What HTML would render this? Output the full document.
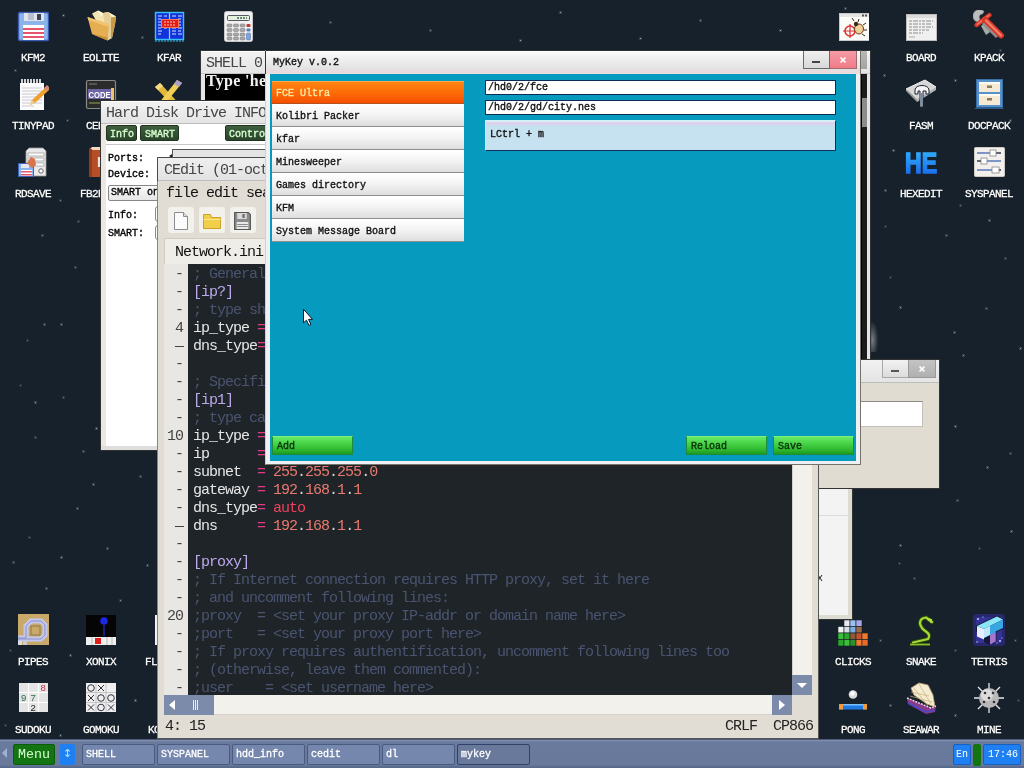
<!DOCTYPE html>
<html lang="en">
<head>
<meta charset="utf-8">
<title>KolibriOS desktop</title>
<style>
html,body{margin:0;padding:0;}
.win,.ico,#bar,#stars{will-change:transform;}
body{width:1024px;height:768px;overflow:hidden;background:#16212b;position:relative;
  font-family:"Liberation Mono","DejaVu Sans Mono",monospace;font-size:10px;line-height:1;color:#000;}
.abs,.abs *{position:absolute;box-sizing:border-box;}
.abs{left:0;top:0;}
.t{white-space:pre;}
/* desktop icons */
.ico{position:absolute;width:68px;height:60px;}
.ico svg{position:absolute;left:18px;top:0;width:32px;height:32px;}
.ico span{position:absolute;left:-10px;width:88px;top:42px;text-align:center;color:#fff;font-size:11px;line-height:12px;letter-spacing:-0.6px;
  font-family:"Liberation Mono",monospace;text-shadow:0 0 1px #000;-webkit-text-stroke:0.3px #fff;}
/* windows */
.win{position:absolute;box-sizing:border-box;}
.win *{position:absolute;box-sizing:border-box;}
.ttl{font-family:"Liberation Mono",monospace;font-size:15px;letter-spacing:-1px;line-height:16px;color:#454545;white-space:pre;margin-top:1px;}
.s6{font-family:"Liberation Mono",monospace;font-size:10px;line-height:11px;white-space:pre;}
.b6{font-family:"Liberation Mono",monospace;font-size:10px;line-height:11px;white-space:pre;font-weight:normal;-webkit-text-stroke:0.35px currentColor;}
/* taskbar */
#bar{position:absolute;left:0;top:739px;width:1024px;height:29px;background:linear-gradient(#8593b1 0,#6a7a9d 2px,#69799c 25px,#586a8c 27px);border-top:1px solid #4d5a78;box-sizing:border-box;}
#bar *{position:absolute;box-sizing:border-box;}
.tb{top:4px;height:21px;width:73px;background:#7587ad;border:1px solid #4a5b80;border-radius:2px;color:#fff;
  font-family:"Liberation Mono",monospace;font-size:10px;line-height:11px;padding:4px 0 0 3px;white-space:pre;-webkit-text-stroke:0.3px #fff;}
.tb.act{background:#69799c;border-color:#30426a;}

#gut,#code{margin:0;font-family:"Liberation Mono",monospace;font-size:15px;letter-spacing:-1px;line-height:18px;white-space:pre;}
#gut{left:9px;top:108px;color:#444;}
#code{left:35px;top:108px;color:#d8d8d8;}
#code i{position:static;font-style:normal;}
#code .c{color:#4a5470;}
#code .s{color:#bca9ec;}
#code .k{color:#e6e6e6;}
#code .q{color:#e23a86;}
#code .v{color:#ea7a6e;}
#code .w{color:#f0405e;}

.li{left:6px;width:192px;height:23px;background:linear-gradient(#ffffff,#f4f4f4 45%,#dedede);border-bottom:1px solid #8e8e8e;border-top:1px solid #fff;
  font-family:"Liberation Mono",monospace;font-size:10px;line-height:11px;font-weight:normal;-webkit-text-stroke:0.35px currentColor;padding:6px 0 0 4px;color:#111;white-space:pre;}
.li.sel{background:linear-gradient(#ff8412,#fc6a06 55%,#f54e00);border-top:1px solid #ffa94e;border-bottom:1px solid #b5511c;color:#ffe9a6;}
.fld{width:351px;height:15px;background:#fff;border:1px solid #0c2c58;font-family:"Liberation Mono",monospace;font-size:10px;line-height:11px;font-weight:normal;-webkit-text-stroke:0.35px currentColor;padding:1px 0 0 2px;color:#111;white-space:pre;}
.gb{width:81px;height:19px;background:linear-gradient(#68ea68,#46d246 40%,#30b830 75%,#1e9a1e);border:1px solid #1c8c3c;border-top-color:#7cf07c;
  font-family:"Liberation Mono",monospace;font-size:10px;line-height:11px;font-weight:normal;-webkit-text-stroke:0.35px currentColor;padding:4px 0 0 4px;color:#0a300a;white-space:pre;}
.hb{height:16px;background:linear-gradient(#3e5e3e,#2a462a);border:1px solid #1f331f;border-radius:2px;color:#d9ffd0;padding-top:3px;}
</style>
</head>
<body>

<!-- ===== stars ===== -->
<div id="stars" class="abs" style="width:1px;height:1px;background:transparent;box-shadow:78px 221px 0 0 rgba(200,215,235,0.43),78px 221px 1px 1px rgba(150,175,205,0.15),42px 235px 0 0 rgba(200,215,235,0.54),42px 235px 1px 1px rgba(150,175,205,0.19),75px 267px 0 0 rgba(200,215,235,0.48),75px 267px 1px 1px rgba(150,175,205,0.17),44px 324px 0 0 rgba(200,215,235,0.56),44px 324px 1px 1px rgba(150,175,205,0.20),61px 324px 0 0 rgba(200,215,235,0.57),61px 324px 1px 1px rgba(150,175,205,0.20),27px 340px 0 0 rgba(200,215,235,0.37),27px 340px 1px 1px rgba(150,175,205,0.13),20px 385px 0 0 rgba(200,215,235,0.35),20px 385px 1px 1px rgba(150,175,205,0.12),35px 402px 0 0 rgba(200,215,235,0.64),35px 402px 1px 1px rgba(150,175,205,0.23),63px 397px 0 0 rgba(200,215,235,0.44),63px 397px 1px 1px rgba(150,175,205,0.15),35px 437px 0 0 rgba(200,215,235,0.43),35px 437px 1px 1px rgba(150,175,205,0.15),96px 428px 0 0 rgba(200,215,235,0.70),96px 428px 1px 1px rgba(150,175,205,0.24),83px 451px 0 0 rgba(200,215,235,0.51),83px 451px 1px 1px rgba(150,175,205,0.18),93px 484px 0 0 rgba(200,215,235,0.64),93px 484px 1px 1px rgba(150,175,205,0.22),140px 476px 0 0 rgba(200,215,235,0.52),140px 476px 1px 1px rgba(150,175,205,0.18),77px 508px 0 0 rgba(200,215,235,0.57),77px 508px 1px 1px rgba(150,175,205,0.20),29px 537px 0 0 rgba(200,215,235,0.40),29px 537px 1px 1px rgba(150,175,205,0.14),107px 548px 0 0 rgba(200,215,235,0.57),107px 548px 1px 1px rgba(150,175,205,0.20),61px 557px 0 0 rgba(200,215,235,0.65),61px 557px 1px 1px rgba(150,175,205,0.23),13px 562px 0 0 rgba(200,215,235,0.53),13px 562px 1px 1px rgba(150,175,205,0.19),147px 565px 0 0 rgba(200,215,235,0.61),147px 565px 1px 1px rgba(150,175,205,0.21),46px 588px 0 0 rgba(200,215,235,0.58),46px 588px 1px 1px rgba(150,175,205,0.20),885px 226px 0 0 rgba(200,215,235,0.37),885px 226px 1px 1px rgba(150,175,205,0.13),989px 220px 0 0 rgba(200,215,235,0.62),989px 220px 1px 1px rgba(150,175,205,0.22),946px 235px 0 0 rgba(200,215,235,0.56),946px 235px 1px 1px rgba(150,175,205,0.19),1005px 258px 0 0 rgba(200,215,235,0.46),1005px 258px 1px 1px rgba(150,175,205,0.16),890px 277px 0 0 rgba(200,215,235,0.36),890px 277px 1px 1px rgba(150,175,205,0.13),900px 307px 0 0 rgba(200,215,235,0.65),900px 307px 1px 1px rgba(150,175,205,0.23),986px 308px 0 0 rgba(200,215,235,0.52),986px 308px 1px 1px rgba(150,175,205,0.18),954px 332px 0 0 rgba(200,215,235,0.60),954px 332px 1px 1px rgba(150,175,205,0.21),1020px 348px 0 0 rgba(200,215,235,0.66),1020px 348px 1px 1px rgba(150,175,205,0.23),963px 355px 0 0 rgba(200,215,235,0.60),963px 355px 1px 1px rgba(150,175,205,0.21),955px 426px 0 0 rgba(200,215,235,0.67),955px 426px 1px 1px rgba(150,175,205,0.24),1010px 453px 0 0 rgba(200,215,235,0.49),1010px 453px 1px 1px rgba(150,175,205,0.17),987px 467px 0 0 rgba(200,215,235,0.63),987px 467px 1px 1px rgba(150,175,205,0.22),957px 500px 0 0 rgba(200,215,235,0.51),957px 500px 1px 1px rgba(150,175,205,0.18),1011px 531px 0 0 rgba(200,215,235,0.68),1011px 531px 1px 1px rgba(150,175,205,0.24),900px 545px 0 0 rgba(200,215,235,0.66),900px 545px 1px 1px rgba(150,175,205,0.23),979px 548px 0 0 rgba(200,215,235,0.38),979px 548px 1px 1px rgba(150,175,205,0.13),899px 563px 0 0 rgba(200,215,235,0.40),899px 563px 1px 1px rgba(150,175,205,0.14),914px 578px 0 0 rgba(200,215,235,0.43),914px 578px 1px 1px rgba(150,175,205,0.15),63px 15px 0 0 rgba(200,215,235,0.69),63px 15px 1px 1px rgba(150,175,205,0.24),142px 37px 0 0 rgba(200,215,235,0.50),142px 37px 1px 1px rgba(150,175,205,0.18),285px 104px 0 0 rgba(200,215,235,0.57),285px 104px 1px 1px rgba(150,175,205,0.20),67px 120px 0 0 rgba(200,215,235,0.46),67px 120px 1px 1px rgba(150,175,205,0.16),15px 70px 0 0 rgba(200,215,235,0.53),15px 70px 1px 1px rgba(150,175,205,0.18),130px 150px 0 0 rgba(200,215,235,0.49),130px 150px 1px 1px rgba(150,175,205,0.17),60px 200px 0 0 rgba(200,215,235,0.47),60px 200px 1px 1px rgba(150,175,205,0.17),330px 22px 0 0 rgba(200,215,235,0.55),330px 22px 1px 1px rgba(150,175,205,0.19),430px 30px 0 0 rgba(200,215,235,0.55),430px 30px 1px 1px rgba(150,175,205,0.19),560px 12px 0 0 rgba(200,215,235,0.67),560px 12px 1px 1px rgba(150,175,205,0.23),700px 20px 0 0 rgba(200,215,235,0.59),700px 20px 1px 1px rgba(150,175,205,0.21),520px 40px 0 0 rgba(200,215,235,0.68),520px 40px 1px 1px rgba(150,175,205,0.24),640px 38px 0 0 rgba(200,215,235,0.65),640px 38px 1px 1px rgba(150,175,205,0.23),780px 30px 0 0 rgba(200,215,235,0.70),780px 30px 1px 1px rgba(150,175,205,0.24),845px 8px 0 0 rgba(200,215,235,0.58),845px 8px 1px 1px rgba(150,175,205,0.20),1000px 50px 0 0 rgba(200,215,235,0.41),1000px 50px 1px 1px rgba(150,175,205,0.14),775px 80px 0 0 rgba(200,215,235,0.65),775px 80px 1px 1px rgba(150,175,205,0.23),893px 150px 0 0 rgba(200,215,235,0.69),893px 150px 1px 1px rgba(150,175,205,0.24),955px 80px 0 0 rgba(200,215,235,0.67),955px 80px 1px 1px rgba(150,175,205,0.23),1010px 120px 0 0 rgba(200,215,235,0.55),1010px 120px 1px 1px rgba(150,175,205,0.19),885px 190px 0 0 rgba(200,215,235,0.60),885px 190px 1px 1px rgba(150,175,205,0.21),960px 205px 0 0 rgba(200,215,235,0.42),960px 205px 1px 1px rgba(150,175,205,0.15),884px 75px 0 0 rgba(200,215,235,0.64),884px 75px 1px 1px rgba(150,175,205,0.22),120px 600px 0 0 rgba(200,215,235,0.55),120px 600px 1px 1px rgba(150,175,205,0.19),230px 600px 0 0 rgba(200,215,235,0.45),230px 600px 1px 1px rgba(150,175,205,0.16),10px 650px 0 0 rgba(200,215,235,0.37),10px 650px 1px 1px rgba(150,175,205,0.13),70px 655px 0 0 rgba(200,215,235,0.65),70px 655px 1px 1px rgba(150,175,205,0.23),135px 700px 0 0 rgba(200,215,235,0.70),135px 700px 1px 1px rgba(150,175,205,0.24),5px 725px 0 0 rgba(200,215,235,0.38),5px 725px 1px 1px rgba(150,175,205,0.13),60px 735px 0 0 rgba(200,215,235,0.63),60px 735px 1px 1px rgba(150,175,205,0.22),880px 640px 0 0 rgba(200,215,235,0.49),880px 640px 1px 1px rgba(150,175,205,0.17),955px 650px 0 0 rgba(200,215,235,0.40),955px 650px 1px 1px rgba(150,175,205,0.14),1015px 640px 0 0 rgba(200,215,235,0.45),1015px 640px 1px 1px rgba(150,175,205,0.16),890px 705px 0 0 rgba(200,215,235,0.62),890px 705px 1px 1px rgba(150,175,205,0.22),955px 715px 0 0 rgba(200,215,235,0.66),955px 715px 1px 1px rgba(150,175,205,0.23),1018px 700px 0 0 rgba(200,215,235,0.37),1018px 700px 1px 1px rgba(150,175,205,0.13),840px 600px 0 0 rgba(200,215,235,0.57),840px 600px 1px 1px rgba(150,175,205,0.20);"></div>

<div class="abs" style="left:871px;top:322px;width:7px;height:30px;background:radial-gradient(ellipse at 20% 60%,rgba(200,200,200,.55),rgba(200,200,200,0) 75%);"></div>
<!-- ===== desktop icons ===== -->
<div id="icons">
<div class="ico" style="left:-1px;top:10px;"><svg viewBox="0 0 32 32"><rect x="1.5" y="2.5" width="30" height="28" rx="1.5" fill="#8db4ea" stroke="#3a5cb0" stroke-width="1.4"/><rect x="7" y="3" width="20" height="8" fill="#dfe3ec"/><rect x="11" y="3" width="6" height="7" fill="#b9c0d0"/><rect x="20" y="4" width="4" height="6" fill="#3b4256"/><rect x="6" y="15" width="21" height="15" fill="#fff"/><rect x="6" y="18" width="21" height="2" fill="#e6536c"/><rect x="6" y="22" width="21" height="2" fill="#e6536c"/><rect x="6" y="26" width="21" height="2" fill="#e6536c"/></svg><span>KFM2</span></div>
<div class="ico" style="left:67px;top:10px;"><svg viewBox="0 0 32 32"><path d="M7 3.500l6-3 5 2.500 5-1 8 4.500-1 8-3 13.500-4.500 2.500z" fill="#f3e4b4"/><path d="M13 .5l5 2.500-2 4zM23 2l8 4.500-4 1z" fill="#fff6d8"/><path d="M18 3l5-1 4 5.500-1 20-3.500 2.500z" fill="#e6cf96"/><path d="M26 7.500l5-1-1 8-3 13.500-1 .5z" fill="#c9994a"/><path d="M2.500 7l21.500 7-1.500 16.500-15.500-6.500z" fill="#e5ae52"/><path d="M2.500 7l21.500 7-.3 3-20.500-7z" fill="#f0c470"/><path d="M7 24l15.500 6.500.3-3z" fill="#c98f38"/></svg><span>EOLITE</span></div>
<div class="ico" style="left:135px;top:10px;"><svg viewBox="0 0 32 32"><rect x="2.5" y="2.5" width="28" height="27" fill="#1232dc" stroke="#37c2f2" stroke-width="1.4"/><path d="M16.5 3v26" stroke="#7fd8ff" stroke-width="1.2"/><g stroke="#cfe6ff" stroke-width="1"><path d="M5 6h4M5 9h3M5 12h3M5 15h3M5 18h3M5 21h4M5 24h3M11 6h3M11 18h3M19 6h4M19 18h4M19 21h4M19 24h4M25 6h4M25 9h3M25 12h3M25 15h3M25 18h4M25 21h3M25 24h4"/></g><rect x="8.5" y="9.5" width="17" height="8" fill="#e01c1c" stroke="#ff7a5a"/><path d="M11 12h12M11 15h12" stroke="#ffd0a0" stroke-width="1" stroke-dasharray="2 1"/><path d="M2 31h29" stroke="#37c2f2" stroke-width="1.2" stroke-dasharray="2 1"/></svg><span>KFAR</span></div>
<div class="ico" style="left:203px;top:10px;"><svg viewBox="0 0 32 32"><rect x="3.5" y="1.5" width="28" height="30" rx="2" fill="#f1f1f1" stroke="#c8c8c8"/><rect x="6.500" y="5.500" width="22" height="5" rx="1" fill="#e6f2e0" stroke="#556"/><path d="M16 8h10" stroke="#465" stroke-width="1.6" stroke-dasharray="2 1"/><g fill="#a9a9a9" stroke="#777" stroke-width=".5"><rect x="6" y="14" width="5" height="3" rx="1"/><rect x="12.500" y="14" width="5" height="3" rx="1"/><rect x="19" y="14" width="5" height="3" rx="1"/><rect x="6" y="18.500" width="5" height="3" rx="1"/><rect x="12.500" y="18.500" width="5" height="3" rx="1"/><rect x="19" y="18.500" width="5" height="3" rx="1"/><rect x="6" y="23" width="5" height="3" rx="1"/><rect x="12.500" y="23" width="5" height="3" rx="1"/><rect x="19" y="23" width="5" height="3" rx="1"/><rect x="6" y="27" width="5" height="3" rx="1"/><rect x="12.500" y="27" width="5" height="3" rx="1"/><rect x="19" y="27" width="5" height="3" rx="1"/></g><rect x="25.500" y="14" width="4" height="3" rx="1" fill="#c23a3a"/><rect x="25.500" y="18.500" width="4" height="3" rx="1" fill="#5b7fc4"/><rect x="25.500" y="23" width="4" height="7" rx="1" fill="#7fa3de" stroke="#4a6ab0" stroke-width=".5"/></svg><span>CALC</span></div>
<div class="ico" style="left:-1px;top:78px;"><svg viewBox="0 0 32 32"><rect x="3" y="5" width="24" height="27" fill="#fbfbfb"/><path d="M5 1v6M8 1v6M11 1v6M14 1v6M17 1v6M20 1v6M23 1v6" stroke="#fff" stroke-width="1.6"/><path d="M5 10h20M5 13h20M5 16h20M5 19h20M5 22h20M5 25h20M5 28h12" stroke="#c9c9d2" stroke-width="1"/><path d="M13 27l2-5 15-14 3 3-15 14z" fill="#f0a030"/><path d="M27 10l3-3 3 3-3 3z" fill="#d78a7a"/><path d="M13 27l2-5 3 3z" fill="#e8cfa0"/></svg><span>TINYPAD</span></div>
<div class="ico" style="left:67px;top:78px;"><svg viewBox="0 0 32 32"><rect x="1.500" y="2.500" width="29" height="28" rx="1.5" fill="#2b2b2b" stroke="#8a8a86" stroke-width="1.2"/><path d="M4 6h8" stroke="#666" stroke-width="1.4"/><rect x="3" y="11" width="23" height="10" fill="#6c66a4"/><rect x="26" y="10" width="3" height="12" fill="#e8c46c"/><text x="3.500" y="19.500" font-family="Liberation Sans,sans-serif" font-weight="bold" font-size="9.500" fill="#fff" textLength="22" lengthAdjust="spacingAndGlyphs">CODE</text><path d="M4 25h12" stroke="#5a6a3a" stroke-width="2"/></svg><span>CEDIT</span></div>
<div class="ico" style="left:135px;top:78px;"><svg viewBox="0 0 32 32"><path d="M2 9l5-4 24 26-6 2z" fill="#e2b93c"/><path d="M24 2l5 3-22 27-5-2z" fill="#f0cf52"/><path d="M24 2l5 3-3 4-5-3z" fill="#a9a0c8"/><path d="M2 9l5-4 3 3-5 4z" fill="#f3dc86"/></svg><span>TABLE</span></div>
<div class="ico" style="left:-1px;top:146px;"><svg viewBox="0 0 32 32"><path d="M9 5l3-3h14l3 3v25H9z" fill="#e9e9e9" stroke="#9a9a9a" stroke-width=".8"/><rect x="11" y="7" width="16" height="3" fill="#fff" stroke="#888" stroke-width=".6"/><rect x="11" y="12" width="16" height="3" fill="#fff" stroke="#888" stroke-width=".6"/><rect x="11" y="17" width="16" height="3" fill="#fff" stroke="#888" stroke-width=".6"/><circle cx="24" cy="25" r="2.200" fill="#fff" stroke="#666"/><rect x="1.500" y="17.500" width="15" height="13" fill="#8db4ea" stroke="#3f63b6"/><rect x="4" y="18" width="8" height="4" fill="#e4e8f0"/><rect x="4" y="24" width="11" height="6" fill="#fff"/><rect x="4" y="25" width="11" height="1.500" fill="#e6536c"/><rect x="4" y="28" width="11" height="1.500" fill="#e6536c"/><path d="M10 17l4-6 4 2 1 6-4 3z" fill="#d8734a"/></svg><span>RDSAVE</span></div>
<div class="ico" style="left:67px;top:146px;"><svg viewBox="0 0 32 32"><path d="M4 3l3-2h22v27l-3 3H4z" fill="#c4572c"/><path d="M4 3h22v28H4z" fill="#b84e28"/><path d="M7 1h22v3H5z" fill="#f0d8c0"/><rect x="4" y="3" width="3" height="28" fill="#963c1e"/><text x="12" y="21" font-family="Liberation Sans,sans-serif" font-weight="bold" font-size="14" fill="#f6e4d8">F</text></svg><span>FB2READ</span></div>
<div class="ico" style="left:819px;top:10px;"><svg viewBox="0 0 32 32"><rect x="2.500" y="3.500" width="30" height="27" fill="#fbfbf8" stroke="#c8c8c8"/><rect x="3" y="4" width="29" height="3" fill="#e4e4e4"/><rect x="25" y="4.500" width="2" height="2" fill="#555"/><rect x="28" y="4.500" width="2" height="2" fill="#555"/><circle cx="13" cy="21" r="5" fill="none" stroke="#e03030" stroke-width="1.6"/><path d="M13 14v14M6 21h14" stroke="#e03030" stroke-width="1.200"/><ellipse cx="22" cy="19" rx="4.500" ry="5" fill="#f0d29a" stroke="#6a3a1a" stroke-width="1"/><circle cx="19" cy="14" r="2.200" fill="#3a2a1a"/><path d="M17 11l-2-3M21 12l1-3M26 15l3-2M27 20h3M25 24l3 2" stroke="#3a2a1a" stroke-width="1"/></svg><span>MTDBG</span></div>
<div class="ico" style="left:887px;top:10px;"><svg viewBox="0 0 32 32"><rect x="1.500" y="4.500" width="30" height="26" fill="#f0f0f0" stroke="#bdbdbd"/><rect x="2" y="5" width="29" height="3" fill="#dcdcdc"/><path d="M4 11h24M4 14h22M4 17h24M4 20h20M4 23h14" stroke="#8c8c8c" stroke-width="1" stroke-dasharray="3 1 5 1 2 1"/><path d="M4 27h6" stroke="#aaa"/></svg><span>BOARD</span></div>
<div class="ico" style="left:955px;top:10px;"><svg viewBox="0 0 32 32"><path d="M11 1.500a6.500 6.500 0 1 0-5.500 11l1.500-3.500a3 3 0 0 1 2.500-5z" fill="#bdbdbd" stroke="#8a8a8a" stroke-width=".7"/><path d="M8 16l5 9 4-3-5-9z" fill="#a8a8a8"/><path d="M10 13l14 14" stroke="#8f8f8f" stroke-width="3"/><path d="M3.500 15l13-10" stroke="#d8382a" stroke-width="4.400" stroke-linecap="round"/><path d="M4 14.500l12-9.300" stroke="#f4806c" stroke-width="1.200" stroke-linecap="round"/><path d="M12 9.500l16 16" stroke="#d8382a" stroke-width="6" stroke-linecap="round"/><path d="M13 10.500l15 15" stroke="#f4806c" stroke-width="2.200" stroke-linecap="round"/></svg><span>KPACK</span></div>
<div class="ico" style="left:887px;top:78px;"><svg viewBox="0 0 32 32"><path d="M1 11l19-9 11 7-19 12z" fill="#d6d6d6" stroke="#f4f4f4" stroke-width="1"/><path d="M1 11l11 10v3L1 13z" fill="#9a9a9a"/><path d="M12 21l19-12v3L12 24z" fill="#b4b4b4"/><path d="M10 12c0-6 14-6 14 0v4h-3v-3h-3v16h-3V13h-2v3h-3z" fill="#f4f4f4" stroke="#1c2430" stroke-width="1"/><rect x="16" y="15" width="1.500" height="13" fill="#6a8ac8"/></svg><span>FASM</span></div>
<div class="ico" style="left:955px;top:78px;"><svg viewBox="0 0 32 32"><rect x="3.500" y="1.500" width="26" height="28" fill="#5592cc" stroke="#3a6ea6"/><rect x="6" y="4" width="21" height="10" fill="#f6ead4"/><rect x="6" y="16" width="21" height="11" fill="#f6ead4"/><rect x="14" y="7.500" width="5" height="2.500" fill="#8a7a5a"/><rect x="14" y="20" width="5" height="2.500" fill="#8a7a5a"/><rect x="6" y="4" width="21" height="2" fill="#fffaf0"/><rect x="6" y="16" width="21" height="2" fill="#fffaf0"/><path d="M1 31h30l-2-2H4z" fill="#2c5c8c"/></svg><span>DOCPACK</span></div>
<div class="ico" style="left:887px;top:146px;"><svg viewBox="0 0 32 32"><defs><linearGradient id="he" x1="0" y1="0" x2="0" y2="1"><stop offset="0" stop-color="#35b8ff"/><stop offset="1" stop-color="#1560e8"/></linearGradient></defs><text x="0" y="27" font-family="Liberation Sans,sans-serif" font-weight="bold" font-size="29" fill="url(#he)" stroke="url(#he)" stroke-width="1.600" textLength="32" lengthAdjust="spacingAndGlyphs">HE</text></svg><span>HEXEDIT</span></div>
<div class="ico" style="left:955px;top:146px;"><svg viewBox="0 0 32 32"><rect x="1.500" y="1.500" width="30" height="29" rx="1" fill="#f2efec" stroke="#cfcac4"/><path d="M4 7h24M4 15h24M4 24h24" stroke="#5a7ab8" stroke-width="1.600"/><path d="M17 7h11M4 15h4M24 24h4" stroke="#555" stroke-width="1.600"/><rect x="17" y="4" width="6" height="6" fill="#fff" stroke="#888" stroke-width=".8"/><rect x="8" y="12" width="6" height="6" fill="#fff" stroke="#888" stroke-width=".8"/><rect x="19" y="21" width="7" height="6" fill="#fff" stroke="#888" stroke-width=".8"/></svg><span>SYSPANEL</span></div>
<div class="ico" style="left:-1px;top:614px;"><svg viewBox="0 0 32 32"><rect x="1" y="0" width="31" height="31" fill="#c9a96a"/><path d="M1 24h8v-12l5-5h10l4 4v10l-4 4H1" fill="none" stroke="#c4c8ee" stroke-width="5"/><path d="M1 24h8v-12l5-5h10l4 4v10l-4 4H1" fill="none" stroke="#8a90c8" stroke-width="1"/><rect x="14" y="12" width="9" height="9" fill="#c9a96a" stroke="#8a7a4a" stroke-width="1"/><rect x="1" y="27" width="4" height="4" fill="#ddd"/><rect x="6" y="27" width="4" height="4" fill="#ccc"/></svg><span>PIPES</span></div>
<div class="ico" style="left:67px;top:614px;"><svg viewBox="0 0 32 32"><rect x="1" y="1" width="30" height="30" fill="#050505"/><circle cx="19" cy="7" r="3.800" fill="#1c28e8"/><path d="M19 10v12" stroke="#1a1a80" stroke-width="2"/><rect x="1" y="23" width="30" height="8" fill="#f0f0f0"/><rect x="10" y="24" width="6" height="6" fill="#e01c1c"/><path d="M7 23v8M22 23v8M27 23v8" stroke="#bbb"/></svg><span>XONIX</span></div>
<div class="ico" style="left:135px;top:614px;"><svg viewBox="0 0 32 32"><rect x="2" y="1" width="29" height="30" fill="#f2f2f2"/></svg><span>FLOOD-IT</span></div>
<div class="ico" style="left:-1px;top:682px;"><svg viewBox="0 0 32 32"><rect x="2" y="1" width="29" height="29" fill="#e4e4e4"/><path d="M11.500 1v29M21.500 1v29M2 10.500h29M2 20.500h29" stroke="#fff" stroke-width="1.200"/><g font-family="Liberation Sans,sans-serif" font-size="9.500"><text x="23.500" y="9" fill="#c0304a">8</text><text x="4" y="19" fill="#2a6a4a">9</text><text x="13.500" y="19" fill="#2a6a4a">7</text><text x="13.500" y="29" fill="#222">2</text></g></svg><span>SUDOKU</span></div>
<div class="ico" style="left:67px;top:682px;"><svg viewBox="0 0 32 32"><rect x="1" y="1" width="30" height="29" fill="#efefef"/><path d="M11 1v29M21 1v29M1 10.500h30M1 20.500h30" stroke="#bbb" stroke-width=".8"/><g fill="none" stroke="#334" stroke-width="1"><circle cx="6" cy="6" r="3.300"/><circle cx="16" cy="16" r="3.300"/><circle cx="26" cy="16" r="3.300"/><circle cx="16" cy="25.500" r="3.300"/><path d="M13 3l6 6M19 3l-6 6M3 13l6 6M9 13l-6 6M3 22.500l6 6M9 22.500l-6 6M23 22.500l6 6M29 22.500l-6 6"/></g></svg><span>GOMOKU</span></div>
<div class="ico" style="left:135px;top:682px;"><svg viewBox="0 0 32 32"></svg><span>KOSILKA</span></div>
<div class="ico" style="left:819px;top:614px;"><svg viewBox="0 0 32 32"><g stroke="#18212a" stroke-width=".6"><rect x="7" y="6" width="6" height="6.500" fill="#e8e8f0"/><rect x="13" y="6" width="6" height="6.500" fill="#9ac0f0"/><rect x="19" y="6" width="6" height="6.500" fill="#a8a8e8"/><rect x="1" y="12.500" width="6" height="6.500" fill="#f0f0f0"/><rect x="7" y="12.500" width="6" height="6.500" fill="#d8dce8"/><rect x="13" y="12.500" width="6" height="6.500" fill="#7ab0e0"/><rect x="19" y="12.500" width="6" height="6.500" fill="#9a6a4a"/><rect x="1" y="19" width="6" height="6.500" fill="#3ac03a"/><rect x="7" y="19" width="6" height="6.500" fill="#2aa82a"/><rect x="13" y="19" width="6" height="6.500" fill="#8a5a3a"/><rect x="19" y="19" width="6" height="6.500" fill="#c8502a"/><rect x="25" y="19" width="6" height="6.500" fill="#f07a2a"/><rect x="1" y="25.500" width="6" height="6.500" fill="#2aa82a"/><rect x="7" y="25.500" width="6" height="6.500" fill="#3ac03a"/><rect x="13" y="25.500" width="6" height="6.500" fill="#2a902a"/><rect x="19" y="25.500" width="6" height="6.500" fill="#f07a2a"/><rect x="25" y="25.500" width="6" height="6.500" fill="#e86a2a"/></g></svg><span>CLICKS</span></div>
<div class="ico" style="left:887px;top:614px;"><svg viewBox="0 0 32 32"><path d="M27 8l-6-4.500q-6 .5-6 6 1 5 6 8 5 3.500 2 7.500l-15 3.500" fill="none" stroke="#2c4a10" stroke-width="4.200" stroke-linejoin="round" stroke-linecap="round"/><path d="M5 30.500h20" stroke="#2c4a10" stroke-width="3"/><path d="M27 8l-6-4.500q-6 .5-6 6 1 5 6 8 5 3.500 2 7.500l-15 3.500" fill="none" stroke="#a4d832" stroke-width="2.200" stroke-linejoin="round" stroke-linecap="round"/><path d="M5 30.500h20" stroke="#8cc02a" stroke-width="1.500"/><path d="M21 3.500l6 1.500-1 4z" fill="#b8e040"/></svg><span>SNAKE</span></div>
<div class="ico" style="left:955px;top:614px;"><svg viewBox="0 0 32 32"><rect x="0" y="0" width="32" height="32" rx="4" fill="#28276e"/><rect x="3" y="3" width="26" height="26" rx="3" fill="#343296"/><g fill="#cfe0ff"><circle cx="5" cy="5" r=".9"/><circle cx="10" cy="3" r=".6"/><circle cx="27" cy="27" r=".9"/><circle cx="29" cy="24" r=".6"/><circle cx="24" cy="29" r=".6"/><circle cx="28" cy="4" r=".6"/><circle cx="4" cy="28" r=".7"/></g><path d="M3 11.500l21-10 7 3.500v9.500l-7.500 3.500v9.500l-7 3.500-5.500-3v-6.500l-8-3.500z" fill="#141a3a"/><path d="M4 12l7 3v10.500l-7-3z" fill="#e8eeff"/><path d="M4 12l20-9.500 6 3-19 9.500z" fill="#8ae6f8"/><path d="M11 15l19-9.500v8.500l-7.500 3.500v9.500l-5.500 3v-9.500l-6 3z" fill="#38a6e2"/><path d="M17 21l5.500-2.500v9l-5.500 3z" fill="#a874cc"/><path d="M11 15l6-3v9l-6 3z" fill="#bfe8fa"/></svg><span>TETRIS</span></div>
<div class="ico" style="left:819px;top:682px;"><svg viewBox="0 0 32 32"><circle cx="16" cy="12.500" r="4.300" fill="#dcdcdc"/><circle cx="15.500" cy="11.500" r="2.300" fill="#fff"/><rect x="2" y="22" width="28" height="5.500" fill="#1e7ae0"/><rect x="2" y="22" width="28" height="1.500" fill="#7ac0ff"/><rect x="2" y="22" width="4" height="5.500" fill="#f09a3a"/><rect x="26" y="22" width="4" height="5.500" fill="#f09a3a"/></svg><span>PONG</span></div>
<div class="ico" style="left:887px;top:682px;"><svg viewBox="0 0 32 32"><path d="M6 6l8-5 9 2 5 10 2 12-8-3-13-9z" fill="#f4ecd0" stroke="#b8a070" stroke-width=".8"/><path d="M9 6l14 18M14 2l12 20M6 10l18 4M5 14l22 6" stroke="#c8b080" stroke-width=".7"/><path d="M2 16l24 10 5-2-1 6-9 2-18-10z" fill="#8a3a8a"/><path d="M2 16l24 10 5-2" fill="none" stroke="#f0d0e0" stroke-width="1.500" stroke-dasharray="2 1"/><path d="M3 21l18 9 9-2" stroke="#4a4ac8" stroke-width="1.500" fill="none"/></svg><span>SEAWAR</span></div>
<div class="ico" style="left:955px;top:682px;"><svg viewBox="0 0 32 32"><g stroke="#e8e8e8" stroke-width="1.300"><path d="M16 1v30M1 16h30M5 5l22 22M27 5L5 27"/></g><circle cx="16" cy="16" r="10" fill="#b8b8b8"/><circle cx="14" cy="13" r="6" fill="#dcdcdc"/><g fill="#333"><circle cx="12" cy="11" r="1.300"/><circle cx="20" cy="11" r="1.300"/><circle cx="16" cy="16" r="1.300"/><circle cx="11" cy="20" r="1.300"/><circle cx="21" cy="20" r="1.300"/></g></svg><span>MINE</span></div>
</div>

<!-- ===== windows ===== -->
<div id="w-sys" class="win" style="left:560px;top:300px;width:293px;height:320px;background:#f3f3f3;border:1px solid #333;">
  <div style="left:287px;top:0;width:4px;height:318px;background:#dcdcd2;"></div>
  <div style="left:0;top:314px;width:291px;height:4px;background:#dcdcd2;"></div>
  <div style="left:0;top:214px;width:291px;height:1px;background:#dcdcdc;"></div>
  <div class="s6" style="left:256px;top:272px;color:#111;">x</div>
</div>
<div id="w-shell" class="win" style="left:200px;top:50px;width:671px;height:420px;background:#e6e6e6;border:1px solid #333;">
  <div style="left:0;top:0;width:669px;height:23px;background:linear-gradient(#f2f2f2,#e4e4e4);border-top:1px solid #fff;border-bottom:1px solid #c4c4c4;"></div>
  <div class="ttl" style="left:5px;top:4px;">SHELL 0.8.2</div>
  <div style="left:4px;top:23px;width:658px;height:391px;background:#000;"></div>
  <div class="ttl" style="left:5px;top:22px;color:#f0f0f0;font-family:'Liberation Serif',serif;font-size:16px;line-height:16px;font-weight:bold;letter-spacing:0.3px;margin-top:0;">Type 'help' for help</div>
  <div style="left:661px;top:23px;width:5px;height:391px;background:#1c1c1c;"></div>
  <div style="left:660px;top:0;width:6px;height:18px;background:linear-gradient(#b8b8b8,#a4a4a4);"></div>
  <div style="left:661px;top:47px;width:5px;height:29px;background:#8c8c8c;"></div>
</div>
<div id="w-dl" class="win" style="left:600px;top:359px;width:340px;height:130px;background:#e0dcd2;border:1px solid #333;">
  <div style="left:0;top:0;width:338px;height:23px;background:linear-gradient(#f1f1f1,#e4e4e4);border-bottom:1px solid #bdbdbd;"></div>
  <div style="left:281px;top:0;width:27px;height:18px;background:linear-gradient(#f2f2f2,#dcdcdc);border:1px solid #a8a8a8;border-top:0;"></div>
  <div style="left:290px;top:10px;width:8px;height:2px;background:#555;"></div>
  <div style="left:307px;top:0;width:28px;height:18px;background:linear-gradient(#c4c4c4,#b0b0b0);border:1px solid #999;border-top:0;"></div>
  <svg style="left:316px;top:4px;" width="10" height="10" viewBox="0 0 10 10"><path d="M2.500 2.500l5 5M7.500 2.500l-5 5" stroke="#fff" stroke-width="1.700"/></svg>
  <div style="left:20px;top:41px;width:302px;height:26px;background:#fff;border:1px solid #c4c0b8;border-top-color:#8e8a84;border-left-color:#8e8a84;"></div>
</div>
<div id="w-hdd" class="win" style="left:100px;top:100px;width:400px;height:351px;background:#fff;border:1px solid #333;">
  <div style="left:0;top:0;width:5px;height:349px;background:#ebe8e3;"></div>
  <div style="left:0;top:345px;width:398px;height:4px;background:#dedede;"></div>
  <div style="left:0;top:0;width:398px;height:23px;background:linear-gradient(#f2f2f2,#e4e4e4);border-top:1px solid #fff;border-bottom:1px solid #bdbdbd;"></div>
  <div class="ttl" style="left:5px;top:4px;">Hard Disk Drive INFO</div>
  <div class="b6 hb" style="left:5px;top:24px;width:31px;padding-left:3px;">Info</div>
  <div class="b6 hb" style="left:39px;top:24px;width:39px;padding-left:4px;">SMART</div>
  <div class="b6 hb" style="left:124px;top:24px;width:60px;padding-left:3px;">Control</div>
  <div style="left:5px;top:43px;width:393px;height:1px;background:#c8c8c8;"></div>
  <div class="b6" style="left:7px;top:52px;">Ports:</div>
  <div style="left:71px;top:48px;width:300px;height:10px;background:#e4e4e4;border:1px solid #555;"></div>
  <div style="left:68px;top:53px;width:0;height:0;border-right:3px solid #222;border-top:2px solid transparent;border-bottom:2px solid transparent;"></div>
  <div class="b6" style="left:7px;top:68px;">Device:</div>
  <div class="b6" style="left:7px;top:84px;width:120px;height:16px;border:1px solid #888;border-radius:2px;background:linear-gradient(#fafafa,#e6e6e6);padding:1px 0 0 2px;">SMART on</div>
  <div class="b6" style="left:7px;top:109px;">Info:</div>
  <div class="b6" style="left:7px;top:127px;">SMART:</div>
  <div style="left:54px;top:105px;width:101px;height:16px;border:1px solid #888;border-radius:3px;"></div>
  <div style="left:54px;top:124px;width:101px;height:15px;border:1px solid #888;border-radius:3px;"></div>
</div>
<div id="w-cedit" class="win" style="left:157px;top:157px;width:662px;height:582px;background:#e1ddd4;border:1px solid #333;border-color:#4a4a4a #555 #555 #858585;">
  <div style="left:-1px;top:0;width:1px;height:23px;background:#4a4a4a;"></div>
  <div style="left:0;top:0;width:660px;height:23px;background:linear-gradient(#efefef,#e2e2e2);border-bottom:1px solid #bdbdbd;"></div>
  <div class="ttl" style="left:6px;top:4px;">CEdit (01-oct-2021)</div>
  <div class="ttl" style="left:8px;top:27px;color:#111;">file edit search</div>
  <!-- toolbar -->
  <div style="left:10px;top:49px;width:26px;height:26px;background:#f3f1ec;border-radius:3px;"></div>
  <div style="left:41px;top:49px;width:26px;height:26px;background:#f3f1ec;border-radius:3px;"></div>
  <div style="left:72px;top:49px;width:26px;height:26px;background:#f3f1ec;border-radius:3px;"></div>
  <svg style="left:14px;top:53px;" width="18" height="20" viewBox="0 0 18 20"><path d="M2.5 1.5h9l4 4v13h-13z" fill="#fbfbfb" stroke="#8a8a92" /><path d="M11.5 1.5v4h4" fill="#ddd" stroke="#8a8a92"/></svg>
  <svg style="left:44px;top:54px;" width="20" height="18" viewBox="0 0 20 18"><path d="M1.5 2.5h7l1 3h9v11h-17z" fill="#f1cf4a" stroke="#c9a227"/><path d="M1.5 7.5h17" stroke="#f9e48a"/></svg>
  <svg style="left:75px;top:53px;" width="19" height="20" viewBox="0 0 18 20" preserveAspectRatio="none"><path d="M1.5 1.5h13l2 2v15h-15z" fill="#8a8a8a" stroke="#555"/><rect x="4" y="2" width="9" height="6" fill="#d8d8d8"/><rect x="9" y="3" width="2" height="4" fill="#666"/><rect x="3.5" y="11" width="11" height="7" fill="#e8e8e8"/><path d="M4 13.5h10M4 15.5h10" stroke="#888"/></svg>
  <!-- tab strip -->
  <div style="left:6px;top:80px;width:649px;height:27px;background:#efede8;border:1px solid #cfcbc3;"></div>
  <div class="ttl" style="left:17px;top:86px;color:#111;">Network.ini</div>
  <!-- gutter + editor -->
  <div style="left:6px;top:106px;width:24px;height:431px;background:#e8e7e4;"></div>
  <pre id="gut"> -
 -
 -
 4
 —
 -
 -
 -
 -
10
 -
 -
 -
 -
 —
 -
 -
 -
 -
20
 -
 -
 -
 -</pre>
  <div style="left:30px;top:106px;width:604px;height:431px;background:#1f2428;"></div>
  <pre id="code"><i class="c">; General settings</i>
<i class="s">[ip?]</i>
<i class="c">; type should be static or dhcp</i>
<i class="k">ip_type </i><i class="q">=</i> <i class="w">static</i>
<i class="k">dns_type</i><i class="q">=</i> <i class="w">static</i>

<i class="c">; Specific settings for interface 1</i>
<i class="s">[ip1]</i>
<i class="c">; type can be static, dhcp or disabled</i>
<i class="k">ip_type </i><i class="q">=</i> <i class="w">dhcp</i>
<i class="k">ip      </i><i class="q">=</i> <i class="v">192</i>.<i class="v">168</i>.<i class="v">1</i>.<i class="v">150</i>
<i class="k">subnet  </i><i class="q">=</i> <i class="v">255</i>.<i class="v">255</i>.<i class="v">255</i>.<i class="v">0</i>
<i class="k">gateway </i><i class="q">=</i> <i class="v">192</i>.<i class="v">168</i>.<i class="v">1</i>.<i class="v">1</i>
<i class="k">dns_type</i><i class="q">=</i> <i class="w">auto</i>
<i class="k">dns     </i><i class="q">=</i> <i class="v">192</i>.<i class="v">168</i>.<i class="v">1</i>.<i class="v">1</i>

<i class="s">[proxy]</i>
<i class="c">; If Internet connection requires HTTP proxy, set it here</i>
<i class="c">; and uncomment following lines:</i>
<i class="c">;proxy  = &lt;set your proxy IP-addr or domain name here&gt;</i>
<i class="c">;port   = &lt;set your proxy port here&gt;</i>
<i class="c">; If proxy requires authentification, uncomment following lines too</i>
<i class="c">; (otherwise, leave them commented):</i>
<i class="c">;user    = &lt;set username here&gt;</i></pre>
  <!-- v scrollbar -->
  <div style="left:634px;top:106px;width:20px;height:431px;background:#f3f1ec;border-left:1px solid #d6d2ca;"></div>
  <div style="left:634px;top:517px;width:20px;height:20px;background:#7d8bab;"></div>
  <div style="left:639px;top:525px;width:0;height:0;border-top:5px solid #fff;border-left:5px solid transparent;border-right:5px solid transparent;"></div>
  <!-- h scrollbar -->
  <div style="left:6px;top:537px;width:628px;height:20px;background:#f3f1ec;border-bottom:1px solid #d6d2ca;"></div>
  <div style="left:6px;top:537px;width:50px;height:20px;background:#7d8bab;"></div>
  <div style="left:11px;top:542px;width:0;height:0;border-right:6px solid #fff;border-top:5px solid transparent;border-bottom:5px solid transparent;"></div>
  <div style="left:35px;top:542px;width:1px;height:10px;background:#e8ecf4;"></div><div style="left:37px;top:542px;width:1px;height:10px;background:#e8ecf4;"></div><div style="left:39px;top:542px;width:1px;height:10px;background:#e8ecf4;"></div>
  <div style="left:614px;top:537px;width:20px;height:20px;background:#7d8bab;"></div>
  <div style="left:621px;top:542px;width:0;height:0;border-left:6px solid #fff;border-top:5px solid transparent;border-bottom:5px solid transparent;"></div>
  <!-- status -->
  <div class="ttl" style="left:7px;top:560px;color:#222;">4: 15</div>
  <div class="ttl" style="left:567px;top:560px;color:#222;">CRLF  CP866</div>
</div>
<div id="w-mykey" class="win" style="left:265px;top:50px;width:596px;height:415px;background:#eef1f3;border:1px solid #333;border-color:#2c2c30 #77736c #77736c #dccacd;">
  <div style="left:-1px;top:0;width:1px;height:23px;background:#3a3038;"></div>
  <div style="left:0;top:0;width:594px;height:23px;background:linear-gradient(#fafafa,#dcdcdc);border-top:1px solid #fff;border-bottom:1px solid #d4c4c8;"></div>
  <div class="b6" style="left:7px;top:6px;color:#111;">MyKey v.0.2</div>
  <div style="left:0;top:19px;width:594px;height:4px;background:#e8dcde;"></div>
  <div style="left:537px;top:0;width:27px;height:18px;background:linear-gradient(#f0f0f0,#d8d8d8);border:1px solid #6a6a6a;border-top:0;"></div>
  <div style="left:546px;top:10px;width:8px;height:2px;background:#444;"></div>
  <div style="left:563px;top:0;width:28px;height:18px;background:linear-gradient(#f59ba4,#ef7c88);border:1px solid #a06a70;border-left-color:#6a6a6a;border-top:0;"></div>
  <svg style="left:572px;top:4px;" width="10" height="10" viewBox="0 0 10 10"><path d="M2.500 2.500l5 5M7.500 2.500l-5 5" stroke="#fff" stroke-width="1.700"/></svg>
  <div style="left:4px;top:23px;width:586px;height:387px;background:#059abe;"></div>
  <div class="li sel" style="top:30px;">FCE Ultra</div>
  <div class="li" style="top:53px;">Kolibri Packer</div>
  <div class="li" style="top:76px;">kfar</div>
  <div class="li" style="top:99px;">Minesweeper</div>
  <div class="li" style="top:122px;">Games directory</div>
  <div class="li" style="top:145px;">KFM</div>
  <div class="li" style="top:168px;">System Message Board</div>

  <div class="fld" style="left:219px;top:29px;">/hd0/2/fce</div>
  <div class="fld" style="left:219px;top:49px;">/hd0/2/gd/city.nes</div>
  <div class="b6" style="left:219px;top:69px;width:351px;height:31px;background:linear-gradient(#d6f0f8 0,#d6f0f8 1px,#dcd2ee 1px,#dcd2ee 4px,#c6e2f0 4px);border-top:1px solid #d6f0f8;border-left:1px solid #d4e8f4;border-right:1px solid #103060;border-bottom:1px solid #103060;padding:8px 0 0 4px;color:#111;">LCtrl + m</div>
  <div class="gb" style="left:6px;top:385px;">Add</div>
  <div class="gb" style="left:420px;top:385px;">Reload</div>
  <div class="gb" style="left:507px;top:385px;">Save</div>
</div>

<svg id="cursor" style="position:absolute;left:302px;top:308px;" width="14" height="20" viewBox="0 0 14 20"><path d="M1.500 1.200v13.600l3-2.600 2.400 5.200 2-1-2.400-5h4z" fill="#fff" stroke="#0a1a2a" stroke-width="1"/></svg>
<!-- ===== taskbar ===== -->
<div id="bar">
  <div style="left:2px;top:8px;width:0;height:0;border-right:5px solid #9fb0d4;border-top:5px solid transparent;border-bottom:5px solid transparent;"></div>
  <div style="left:13px;top:4px;width:42px;height:21px;background:#127512;border:1px solid #0c5c0c;border-radius:2px;color:#d6ffd0;font-family:'Liberation Mono',monospace;font-size:13.3px;line-height:16px;padding:2px 0 0 4px;">Menu</div>
  <div style="left:60px;top:4px;width:15px;height:21px;background:#1e80f2;border-radius:2px;color:#bfe4ff;font-size:11px;line-height:19px;text-align:center;font-family:'DejaVu Sans',sans-serif;">&#8597;</div>
  <div class="tb" style="left:82px;">SHELL</div>
  <div class="tb" style="left:157px;">SYSPANEL</div>
  <div class="tb" style="left:232px;">hdd_info</div>
  <div class="tb" style="left:307px;">cedit</div>
  <div class="tb" style="left:382px;">dl</div>
  <div class="tb act" style="left:457px;">mykey</div>
  <div style="left:953px;top:4px;width:18px;height:21px;background:#1e80f2;border:1px solid #1560c0;border-radius:2px;color:#fff;font-family:'Liberation Mono',monospace;font-size:10px;line-height:11px;padding:4px 0 0 2px;">En</div>
  <div style="left:973px;top:4px;width:8px;height:22px;background:#127512;border-radius:2px;"></div>
  <div style="left:983px;top:4px;width:38px;height:21px;background:#1e80f2;border:1px solid #1560c0;border-radius:2px;color:#fff;font-family:'Liberation Mono',monospace;font-size:10px;line-height:11px;padding:4px 0 0 4px;">17:46</div>
</div>

</body>
</html>
